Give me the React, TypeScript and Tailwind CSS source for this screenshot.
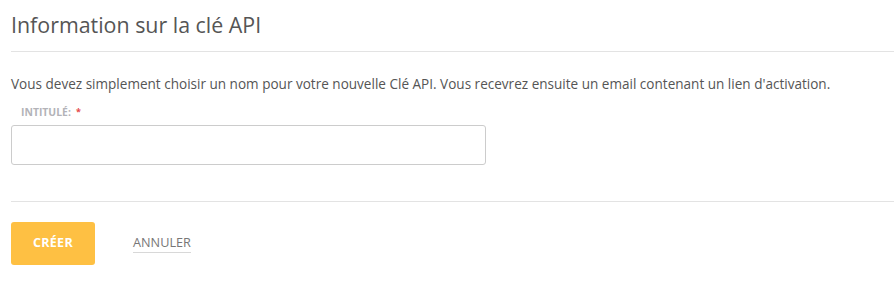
import React from "react";

export default function App() {
  return (
    <div className="w-[894px] h-[282px] bg-white pl-[11px] pt-[10px] text-[#555555]" style={{ fontFamily: '"Open Sans", "Noto Sans", sans-serif' }}>
      <h1 className="text-[21.4px] leading-[30px] font-normal text-[#555555]">Information sur la clé API</h1>
      <div className="mt-[11px] h-px bg-[#e3e3e3]" />
      <p className="mt-[23px] text-[13.55px] leading-[18px] text-[#555555] whitespace-nowrap">
        Vous devez simplement choisir un nom pour votre nouvelle Clé API. Vous recevrez ensuite un email contenant un lien d'activation.
      </p>
      <label className="mt-[12px] ml-[10px] flex items-center gap-[5px] text-[10.4px] leading-[14px] font-bold text-[#b3b3b8]">
        INTITULÉ:<span className="text-[#e5484d] text-[9px]">*</span>
      </label>
      <input type="text" className="mt-[6px] block w-[475px] h-[40px] rounded-[3px] border border-[#cccccc] bg-white outline-none" />
      <div className="mt-[36px] h-px bg-[#e3e3e3]" />
      <div className="mt-[20px] flex items-center">
        <button className="w-[84px] h-[43px] rounded-[3px] bg-[#fec043] text-white text-[12.5px] font-bold tracking-[0.3px]">CRÉER</button>
        <button className="ml-[38px] text-[12.7px] leading-[16px] text-[#777777] border-b border-[#d8d8d8] pb-[2px]">ANNULER</button>
      </div>
    </div>
  );
}
